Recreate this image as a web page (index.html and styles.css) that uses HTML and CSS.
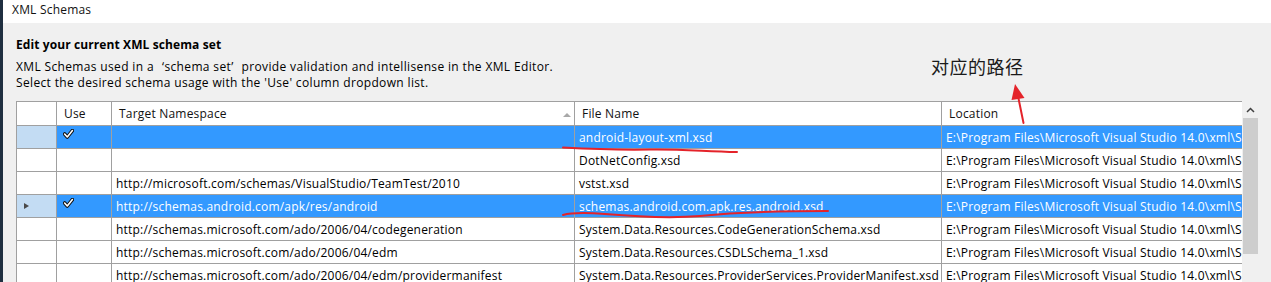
FILE: index.html
```html
<!DOCTYPE html>
<html>
<head>
<meta charset="utf-8">
<link rel="stylesheet" href="styles.css">
</head>
<body>
<div class="window">
  <div class="titlebar">XML Schemas</div>
  <div class="content">
    <div class="heading">Edit your current XML schema set</div>
    <div class="desc">XML Schemas used in a <span class="q ql">‘</span>schema set<span class="q qr">’</span> provide validation and intellisense in the XML Editor.</div>
    <div class="desc">Select the desired schema usage with the 'Use' column dropdown list.</div>
    <div class="grid-area">
      <div class="grid-clip">
        <table class="grid">
          <colgroup>
            <col class="c-rh"><col class="c-use"><col class="c-ns"><col class="c-file"><col class="c-loc">
          </colgroup>
          <thead>
            <tr>
              <th class="rh"></th>
              <th>Use</th>
              <th class="sorted">Target Namespace<span class="sort-arrow"></span></th>
              <th>File Name</th>
              <th>Location</th>
            </tr>
          </thead>
          <tbody>
            <tr class="sel">
              <td class="rh"></td>
              <td><svg class="check" width="11" height="10" viewBox="0 0 11 10"><path d="M1.6 5 L4.3 8 L9.4 1.6" fill="none" stroke="#111111" stroke-width="3.6" stroke-linejoin="round" stroke-linecap="round"/><path d="M1.6 5 L4.3 8 L9.4 1.6" fill="none" stroke="#ffffff" stroke-width="1.6" stroke-linejoin="round" stroke-linecap="round"/></svg></td>
              <td></td>
              <td>android-layout-xml.xsd</td>
              <td>E:\Program Files\Microsoft Visual Studio 14.0\xml\Schemas\android-layout-xml.xsd</td>
            </tr>
            <tr>
              <td class="rh"></td>
              <td></td>
              <td></td>
              <td>DotNetConfig.xsd</td>
              <td>E:\Program Files\Microsoft Visual Studio 14.0\xml\Schemas\DotNetConfig.xsd</td>
            </tr>
            <tr>
              <td class="rh"></td>
              <td></td>
              <td>http://microsoft.com/schemas/VisualStudio/TeamTest/2010</td>
              <td>vstst.xsd</td>
              <td>E:\Program Files\Microsoft Visual Studio 14.0\xml\Schemas\vstst.xsd</td>
            </tr>
            <tr class="sel">
              <td class="rh"><span class="row-arrow"></span></td>
              <td><svg class="check" width="11" height="10" viewBox="0 0 11 10"><path d="M1.6 5 L4.3 8 L9.4 1.6" fill="none" stroke="#111111" stroke-width="3.6" stroke-linejoin="round" stroke-linecap="round"/><path d="M1.6 5 L4.3 8 L9.4 1.6" fill="none" stroke="#ffffff" stroke-width="1.6" stroke-linejoin="round" stroke-linecap="round"/></svg></td>
              <td>http://schemas.android.com/apk/res/android</td>
              <td>schemas.android.com.apk.res.android.xsd</td>
              <td>E:\Program Files\Microsoft Visual Studio 14.0\xml\Schemas\schemas.android.com.apk.res.android.xsd</td>
            </tr>
            <tr>
              <td class="rh"></td>
              <td></td>
              <td>http://schemas.microsoft.com/ado/2006/04/codegeneration</td>
              <td>System.Data.Resources.CodeGenerationSchema.xsd</td>
              <td>E:\Program Files\Microsoft Visual Studio 14.0\xml\Schemas\System.Data.Resources.CodeGenerationSchema.xsd</td>
            </tr>
            <tr>
              <td class="rh"></td>
              <td></td>
              <td>http://schemas.microsoft.com/ado/2006/04/edm</td>
              <td>System.Data.Resources.CSDLSchema_1.xsd</td>
              <td>E:\Program Files\Microsoft Visual Studio 14.0\xml\Schemas\System.Data.Resources.CSDLSchema_1.xsd</td>
            </tr>
            <tr>
              <td class="rh"></td>
              <td></td>
              <td>http://schemas.microsoft.com/ado/2006/04/edm/providermanifest</td>
              <td>System.Data.Resources.ProviderServices.ProviderManifest.xsd</td>
              <td>E:\Program Files\Microsoft Visual Studio 14.0\xml\Schemas\System.Data.Resources.ProviderServices.ProviderManifest.xsd</td>
            </tr>
          </tbody>
        </table>
      </div>
      <div class="vscroll">
        <div class="vs-up"><svg width="9" height="6" viewBox="0 0 9 6"><path d="M1 5 L4.5 1.5 L8 5" fill="none" stroke="#404040" stroke-width="1.5"/></svg></div>
        <div class="vs-thumb"></div>
      </div>
      <div class="right-gap"></div>
      <div class="right-line"></div>
    </div>
  </div>

  <div class="note">对应的路径</div>
  <svg class="marks" width="1271" height="282" viewBox="0 0 1271 282">
    <path d="M563 147.5 C590 149 620 150 650 149.5 C680 149 700 151 737 152" fill="none" stroke="#e4232a" stroke-width="2" stroke-linecap="round"/>
    <path d="M563 215 C572 212.5 585 212.5 605 214 C640 217 670 218.5 700 216 C740 212 790 211 828 211" fill="none" stroke="#e4232a" stroke-width="2" stroke-linecap="round"/>
    <path d="M1023.5 123 L1018 96" fill="none" stroke="#e4232a" stroke-width="2" stroke-linecap="round"/>
    <polygon points="1015,84 1011.5,100 1024.5,98" fill="#e4232a"/>
  </svg>
</div>
</body>
</html>
```

FILE: styles.css
```css
html, body {
  margin: 0;
  padding: 0;
}

body {
  width: 1271px;
  height: 282px;
  overflow: hidden;
  background: #f0f0f0;
  font-family: "Open Sans", "Noto Sans CJK SC", sans-serif;
  font-size: 12px;
  letter-spacing: 0.2px;
  color: #000;
}

.window {
  position: relative;
  height: 282px;
  border-left: 3px solid #1f2f40;
  background: #f0f0f0;
}

.titlebar {
  height: 23px;
  line-height: 19px;
  padding-left: 9px;
  background: #ffffff;
  color: #111;
}

.content {
  padding: 13px 0 0 13px;
}

.heading {
  font-weight: bold;
  letter-spacing: 0.1px;
  line-height: 17px;
  height: 17px;
  margin-bottom: 6px;
  color: #000;
}

.desc {
  line-height: 16px;
  letter-spacing: 0.35px;
  color: #000;
}

.q {
  display: inline-block;
  width: 7px;
}

.ql {
  text-align: right;
}

.qr {
  text-align: left;
}

.grid-area {
  display: flex;
  margin-top: 10px;
  height: 181px;
}

.grid-clip {
  width: 1226px;
  overflow: hidden;
  flex: none;
}

.grid {
  border-collapse: collapse;
  table-layout: fixed;
  width: 1300px;
}

.c-rh { width: 40px; }
.c-use { width: 55px; }
.c-ns { width: 463px; }
.c-file { width: 367px; }
.c-loc { width: 375px; }

.grid th,
.grid td {
  border: 1px solid #a0a0a0;
  padding: 0 0 0 4px;
  white-space: nowrap;
  overflow: hidden;
  text-align: left;
  font-weight: normal;
}

.grid th {
  height: 23px;
  background: #ffffff;
  color: #111;
  line-height: 22px;
  padding-left: 7px;
}

.grid td {
  height: 22px;
  line-height: 21px;
  background: #ffffff;
  color: #000;
}

.grid th.sorted {
  position: relative;
}

.sort-arrow {
  position: absolute;
  right: 3px;
  top: 11px;
  width: 0;
  height: 0;
  border-left: 4px solid transparent;
  border-right: 4px solid transparent;
  border-bottom: 4px solid #a8a8a8;
}

.grid tr.sel td {
  background: #3399ff;
  color: #ffffff;
}

.grid tr.sel td.rh {
  background: #c3dcf3;
}

.grid td.rh {
  padding: 0;
}

.row-arrow {
  display: block;
  margin: 0 0 0 7px;
  width: 0;
  height: 0;
  border-top: 3px solid transparent;
  border-bottom: 3px solid transparent;
  border-left: 5px solid #4a4a4a;
}

.check {
  display: block;
  margin: 0 0 0 2px;
  position: relative;
  top: -3px;
}

.vscroll {
  width: 17px;
  flex: none;
  background: #f0f0f0;
  display: flex;
  flex-direction: column;
  align-items: center;
}

.vs-up {
  height: 17px;
  width: 17px;
  display: flex;
  align-items: center;
  justify-content: center;
  background: #f0f0f0;
}

.vs-thumb {
  width: 15px;
  height: 136px;
  background: #cdcdcd;
}

.right-gap {
  width: 12px;
  flex: none;
}

.right-line {
  width: 1px;
  flex: none;
  background: #cfcfcf;
  margin-top: 2px;
}

.note {
  position: absolute;
  left: 928px;
  top: 54px;
  font-family: "Noto Sans CJK SC", sans-serif;
  font-size: 18px;
  letter-spacing: 0.5px;
  line-height: 24px;
  color: #1a1a1a;
}

.marks {
  position: absolute;
  left: -3px;
  top: 0;
  pointer-events: none;
}
```
